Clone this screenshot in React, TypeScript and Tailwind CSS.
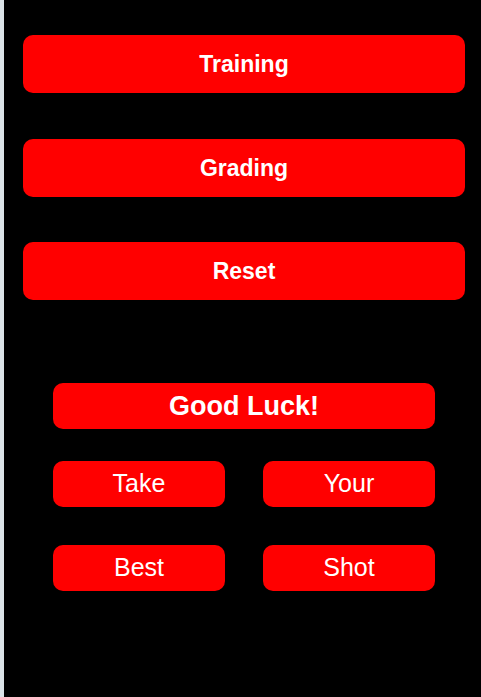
export default function App() {
  const big = "h-[58px] w-full rounded-[10px] bg-[#ff0000] text-white font-bold text-[23px] flex items-center justify-center";
  const small = "h-[46px] rounded-[10px] bg-[#ff0000] text-white text-[25px] flex items-center justify-center";

  return (
    <div
      className="min-h-screen h-[697px] bg-black border-l-4 border-[#dbe3e8]"
      style={{ fontFamily: '"Liberation Sans", Arial, sans-serif' }}
    >
      <div className="ml-[19px] w-[442px] pt-[35px] flex flex-col">
        <button className={big}>Training</button>
        <button className={big + " mt-[46px]"}>Grading</button>
        <button className={big + " mt-[45px]"}>Reset</button>

        <div className="mx-[30px] mt-[83px] flex flex-col">
          <div className="h-[46px] rounded-[10px] bg-[#ff0000] text-white font-bold text-[27px] flex items-center justify-center">
            Good Luck!
          </div>
          <div className="mt-[32px] grid grid-cols-2 gap-x-[38px] gap-y-[38px]">
            <div className={small}>Take</div>
            <div className={small}>Your</div>
            <div className={small}>Best</div>
            <div className={small}>Shot</div>
          </div>
        </div>
      </div>
    </div>
  );
}
